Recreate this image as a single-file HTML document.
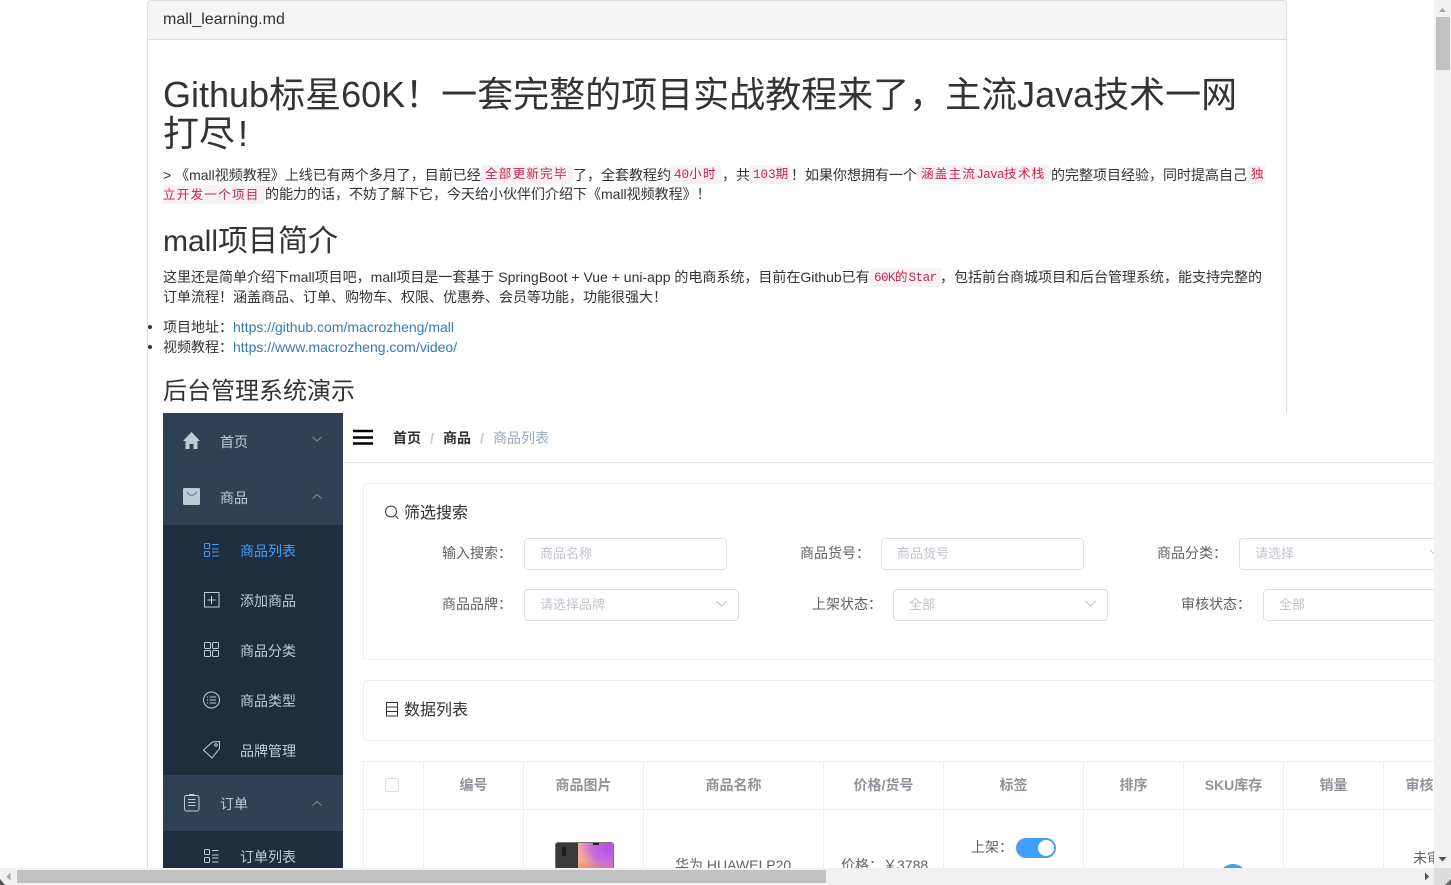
<!DOCTYPE html>
<html lang="zh"><head><meta charset="utf-8"><title>mall_learning.md</title>
<style>
html,body{margin:0;padding:0;width:1451px;height:885px;overflow:hidden;background:#fff}
body{position:relative;font-family:"Liberation Sans","Noto Sans CJK SC",sans-serif;font-size:14px;color:#333}
.t{position:absolute;white-space:nowrap;line-height:20px}
.k{position:absolute;white-space:nowrap;line-height:16px;height:16px;padding:2px 4px 1px;background:#f9f2f4;color:#c7254e;border-radius:4px;font-family:"Liberation Mono","Noto Sans CJK SC",monospace;font-size:12.6px;letter-spacing:-.6px}
.k i{font-style:normal;letter-spacing:1.2px}
.a{color:#337ab7}
svg{position:absolute;left:0;top:0;overflow:visible}
#img{position:absolute;left:163px;top:413px;width:1271px;height:455px;background:#fff;overflow:hidden}
#in{position:absolute;left:-163px;top:-413px;width:1451px;height:885px}
.b{position:absolute;box-sizing:border-box}
.s{color:#bfcbd9}
.lb{color:#606266}
.ph{color:#c0c4cc;font-size:13px;margin-top:1px}
.th{font-weight:bold;color:#909399;text-align:center}
</style></head><body>
<!-- markdown panel -->
<div class="b" style="left:147px;top:0;width:1140px;height:885px;border:1px solid #ddd;border-radius:4px 4px 0 0"></div>
<div class="b" style="left:148px;top:1px;width:1138px;height:39px;background:#f5f5f5;border-bottom:1px solid #ddd;border-radius:3px 3px 0 0"></div>
<div class="t" style="left:163px;top:9px;font-size:16px;line-height:22px">mall_learning.md</div>
<div class="t" style="left:163px;top:75px;font-size:36px;line-height:40px">Github标星60K！一套完整的项目实战教程来了，主流Java技术一网</div>
<div class="t" style="left:163px;top:114px;font-size:36px;line-height:40px">打尽<span style="margin-left:3px">!</span></div>

<div class="t" style="left:163px;top:165px">&gt; 《mall视频教程》上线已有两个多月了，目前已经</div>
<div class="k" style="left:481px;top:165px;width:84px"><i>全部更新完毕</i></div>
<div class="t" style="left:573px;top:165px">了，全套教程约</div>
<div class="k" style="left:670px;top:165px;width:43px;letter-spacing:0">40<i>小时</i></div>
<div class="t" style="left:722px;top:165px">，共</div>
<div class="k" style="left:749px;top:165px;width:34px;letter-spacing:0">103期</div>
<div class="t" style="left:791px;top:165px">！如果你想拥有一个</div>
<div class="k" style="left:917px;top:165px;width:126px"><i>涵盖主流</i>Java<i>技术栈</i></div>
<div class="t" style="left:1051px;top:165px">的完整项目经验，同时提高自己</div>
<div class="k" style="left:1247px;top:165px;width:14px;padding-right:0;border-radius:4px 0 0 4px"><i>独</i></div>
<div class="k" style="left:163px;top:185px;width:98px;padding:3px 4px 0 0;border-radius:0 4px 4px 0"><i>立开发一个项目</i></div>
<div class="t" style="left:265px;top:184px">的能力的话，不妨了解下它，今天给小伙伴们介绍下《mall视频教程》！</div>

<div class="t" style="left:163px;top:224px;font-size:30px;line-height:36px">mall项目简介</div>
<div class="t" style="left:163px;top:267px">这里还是简单介绍下mall项目吧，mall项目是一套基于 SpringBoot + Vue + uni-app 的电商系统，目前在Github已有</div>
<div class="k" style="left:870px;top:268px;width:64px">60K<i>的</i>Star</div>
<div class="t" style="left:940px;top:267px">，包括前台商城项目和后台管理系统，能支持完整的</div>
<div class="t" style="left:163px;top:287px">订单流程！涵盖商品、订单、购物车、权限、优惠券、会员等功能，功能很强大！</div>
<div class="b" style="left:148px;top:325px;width:4px;height:4px;border-radius:50%;background:#333"></div>
<div class="b" style="left:148px;top:345px;width:4px;height:4px;border-radius:50%;background:#333"></div>
<div class="t" style="left:163px;top:317px">项目地址：<span class="a">https://github.com/macrozheng/mall</span></div>
<div class="t" style="left:163px;top:337px">视频教程：<span class="a">https://www.macrozheng.com/video/</span></div>
<div class="t" style="left:163px;top:378px;font-size:24px;line-height:28px">后台管理系统演示</div>

<!-- embedded screenshot -->
<div id="img"><div id="in">
<div class="b" style="left:163px;top:413px;width:180px;height:455px;background:#304156"></div>
<div class="b" style="left:163px;top:525px;width:180px;height:250px;background:#1f2d3d"></div>
<div class="b" style="left:163px;top:831px;width:180px;height:37px;background:#1f2d3d"></div>
<div class="t s" style="left:220px;top:432px">首页</div>
<div class="t s" style="left:220px;top:488px">商品</div>
<div class="t" style="left:240px;top:541px;color:#409eff">商品列表</div>
<div class="t s" style="left:240px;top:591px">添加商品</div>
<div class="t s" style="left:240px;top:641px">商品分类</div>
<div class="t s" style="left:240px;top:691px">商品类型</div>
<div class="t s" style="left:240px;top:741px">品牌管理</div>
<div class="t s" style="left:220px;top:794px">订单</div>
<div class="t s" style="left:240px;top:847px">订单列表</div>

<svg width="1451" height="885" fill="none">
<path d="M191.5 432L200 441h-2.5v8h-4v-5h-4v5h-4v-8H183z" fill="#bfcbd9"/>
<rect x="183" y="488" width="17" height="17" rx="1.5" fill="#bfcbd9"/>
<path d="M187 491.500c1.500 5 8 5 9.500 0" stroke="#5a6a80" stroke-width=".9"/>
<path d="M312.500 437l4.500 4 4.500-4M312.500 498.500l4.500-4 4.500 4M312.500 805.500l4.500-4 4.500 4" stroke="#7f8b9a" stroke-width="1"/>
<g stroke="#409eff" stroke-width="1"><rect x="204.500" y="543.500" width="5" height="5" rx="1"/><rect x="204.500" y="551.500" width="5" height="5" rx="1"/><path d="M212 544.500h6.500M212 549h6.500M212 552h6.500M212 556h6.500"/></g>
<g stroke="#bfcbd9" stroke-width="1">
<path d="M204.500 592.500h14.500v14.500h-14.500z"/><path d="M207.500 600h8M211.500 596v8"/>
<rect x="204.500" y="642.500" width="6" height="6" rx="1"/><rect x="212.500" y="642.500" width="6" height="6" rx="1"/><rect x="204.500" y="650.500" width="6" height="6" rx="1"/><rect x="212.500" y="650.500" width="6" height="6" rx="1"/>
<circle cx="211.500" cy="700" r="8"/><path d="M207 697h1M209.500 697h6.500M207 700h1M209.500 700h6.500M207 703h1M209.500 703h6.500"/>
<path d="M203.500 750l9-8 7-.5v7l-7.500 9.500z"/><circle cx="216" cy="745" r="1.300"/>
<rect x="184.500" y="795.500" width="14.500" height="15.500" rx="2"/><path d="M189 794.500h5.500M188 799.500h7.500M188 802.500h7.500M188 805.500h7.500"/>
<g stroke="#bfcbd9"><rect x="204.500" y="849.500" width="5" height="5" rx="1"/><rect x="204.500" y="857.500" width="5" height="5" rx="1"/><path d="M212 850.500h6.500M212 855h6.500M212 858h6.500M212 862h6.500"/></g>
</g>
<path d="M353 431h20M353 437.500h20M353 443.500h20" stroke="#000" stroke-width="2.500"/>
<circle cx="391" cy="511.500" r="5.500" stroke="#333" stroke-width="1"/><path d="M395.500 516l2.800 2.800" stroke="#333"/>
<path d="M386.500 702.500h11v13.500h-11zM386.500 707h11M386.500 711.500h11" stroke="#333" stroke-width="1"/>
<path d="M716.500 601l5 5 5-5M1085.500 601l5 5 5-5M1430 550l4 4" stroke="#c0c4cc" stroke-width="1"/>
</svg>

<div class="b" style="left:343px;top:462px;width:1091px;height:1px;background:#e6e6e6"></div>
<div class="t" style="left:393px;top:428px;font-weight:bold;color:#303133">首页</div>
<div class="t" style="left:430px;top:428px;font-weight:bold;color:#c0c4cc">/</div>
<div class="t" style="left:443px;top:428px;font-weight:bold;color:#303133">商品</div>
<div class="t" style="left:480px;top:428px;font-weight:bold;color:#c0c4cc">/</div>
<div class="t" style="left:493px;top:428px;color:#97a8be">商品列表</div>

<!-- filter card -->
<div class="b" style="left:363px;top:483px;width:1200px;height:177px;border:1px solid #ebeef5;border-radius:4px"></div>
<div class="t" style="left:404px;top:504px;font-size:16px;line-height:20px;color:#303133">筛选搜索</div>
<div class="t lb" style="left:442px;top:543px">输入搜索：</div>
<div class="b" style="left:524px;top:538px;width:203px;height:32px;border:1px solid #dcdfe6;border-radius:4px"></div>
<div class="t ph" style="left:540px;top:543px">商品名称</div>
<div class="t lb" style="left:800px;top:543px">商品货号：</div>
<div class="b" style="left:881px;top:538px;width:203px;height:32px;border:1px solid #dcdfe6;border-radius:4px"></div>
<div class="t ph" style="left:897px;top:543px">商品货号</div>
<div class="t lb" style="left:1157px;top:543px">商品分类：</div>
<div class="b" style="left:1239px;top:538px;width:215px;height:32px;border:1px solid #dcdfe6;border-radius:4px"></div>
<div class="t ph" style="left:1255px;top:543px">请选择</div>
<div class="t lb" style="left:442px;top:594px">商品品牌：</div>
<div class="b" style="left:524px;top:589px;width:215px;height:32px;border:1px solid #dcdfe6;border-radius:4px"></div>
<div class="t ph" style="left:540px;top:594px">请选择品牌</div>
<div class="t lb" style="left:812px;top:594px">上架状态：</div>
<div class="b" style="left:893px;top:589px;width:215px;height:32px;border:1px solid #dcdfe6;border-radius:4px"></div>
<div class="t ph" style="left:909px;top:594px">全部</div>
<div class="t lb" style="left:1181px;top:594px">审核状态：</div>
<div class="b" style="left:1263px;top:589px;width:215px;height:32px;border:1px solid #dcdfe6;border-radius:4px"></div>
<div class="t ph" style="left:1279px;top:594px">全部</div>

<!-- list card -->
<div class="b" style="left:363px;top:680px;width:1200px;height:61px;border:1px solid #ebeef5;border-radius:4px"></div>
<div class="t" style="left:404px;top:701px;font-size:16px;line-height:20px;color:#303133">数据列表</div>

<!-- table -->
<div class="b" style="left:363px;top:761px;width:1200px;height:1px;background:#ebeef5"></div>
<div class="b" style="left:363px;top:809px;width:1200px;height:1px;background:#ebeef5"></div>
<div class="b" style="left:363px;top:761px;width:1px;height:120px;background:#ebeef5"></div>
<div class="b" style="left:423px;top:761px;width:1px;height:120px;background:#ebeef5"></div>
<div class="b" style="left:523px;top:761px;width:1px;height:120px;background:#ebeef5"></div>
<div class="b" style="left:643px;top:761px;width:1px;height:120px;background:#ebeef5"></div>
<div class="b" style="left:823px;top:761px;width:1px;height:120px;background:#ebeef5"></div>
<div class="b" style="left:943px;top:761px;width:1px;height:120px;background:#ebeef5"></div>
<div class="b" style="left:1083px;top:761px;width:1px;height:120px;background:#ebeef5"></div>
<div class="b" style="left:1183px;top:761px;width:1px;height:120px;background:#ebeef5"></div>
<div class="b" style="left:1283px;top:761px;width:1px;height:120px;background:#ebeef5"></div>
<div class="b" style="left:1383px;top:761px;width:1px;height:120px;background:#ebeef5"></div>
<div class="b" style="left:385px;top:778px;width:14px;height:14px;border:1px solid #dcdfe6;border-radius:2px"></div>
<div class="t th" style="left:424px;top:775px;width:99px">编号</div>
<div class="t th" style="left:524px;top:775px;width:119px">商品图片</div>
<div class="t th" style="left:644px;top:775px;width:179px">商品名称</div>
<div class="t th" style="left:824px;top:775px;width:119px">价格/货号</div>
<div class="t th" style="left:944px;top:775px;width:139px">标签</div>
<div class="t th" style="left:1084px;top:775px;width:99px">排序</div>
<div class="t th" style="left:1184px;top:775px;width:99px">SKU库存</div>
<div class="t th" style="left:1284px;top:775px;width:99px">销量</div>
<div class="t th" style="left:1384px;top:775px;width:71px">审核</div>

<div class="b" style="left:555px;top:842px;width:59px;height:40px;border-radius:3px;background:#3a3a3a;overflow:hidden;border:1px solid #777">
 <div class="b" style="left:22px;top:0;width:35px;height:40px;background:radial-gradient(circle at 85% 10%,#b44fe0 0,#c86fd8 35%,rgba(200,111,216,0) 60%),linear-gradient(170deg,#f2a0b0 0%,#f5b090 40%,#fb5a24 80%)"></div>
 <div class="b" style="left:37px;top:0;width:6px;height:2px;background:#222"></div>
 <div class="b" style="left:6px;top:4px;width:4px;height:9px;background:#1c1c1c"></div>
</div>
<div class="t" style="left:675px;top:855px;color:#606266">华为 HUAWEI P20</div>
<div class="t" style="left:841px;top:855px;color:#606266">价格：￥3788</div>
<div class="t" style="left:971px;top:837px;color:#606266">上架：</div>
<div class="b" style="left:1016px;top:838px;width:40px;height:20px;border-radius:10px;background:#409eff"></div>
<div class="b" style="left:1038px;top:840px;width:16px;height:16px;border-radius:50%;background:#fff"></div>
<div class="b" style="left:1219px;top:864px;width:28px;height:28px;border-radius:50%;background:#409eff"></div>
<div class="t" style="left:1413px;top:848px;color:#606266">未审核</div>
</div></div>

<!-- scrollbars -->
<div class="b" style="left:1434px;top:0;width:17px;height:885px;background:#f1f1f1"></div>
<div class="b" style="left:1436px;top:17px;width:14px;height:53px;background:#c1c1c1"></div>
<div class="b" style="left:0;top:868px;width:1434px;height:17px;background:#f1f1f1"></div>
<div class="b" style="left:17px;top:870px;width:809px;height:13px;background:#c1c1c1"></div>
<div class="b" style="left:1434px;top:868px;width:17px;height:17px;background:#dcdcdc"></div>
<svg width="1451" height="885">
<path d="M1442.500 8l3.500 4h-7z" fill="#a3a3a3"/>
<path d="M1438.500 857h8l-4 4.500z" fill="#505050"/>
<path d="M10.500 872.500v8l-4-4z" fill="#a3a3a3"/>
<path d="M1425 872.500v8l4-4z" fill="#505050"/>
<path d="M1451 879v6h-6z" fill="#6a6a6a"/>
<path d="M0 879l5 6H0z" fill="#555"/>
</svg>
</body></html>
